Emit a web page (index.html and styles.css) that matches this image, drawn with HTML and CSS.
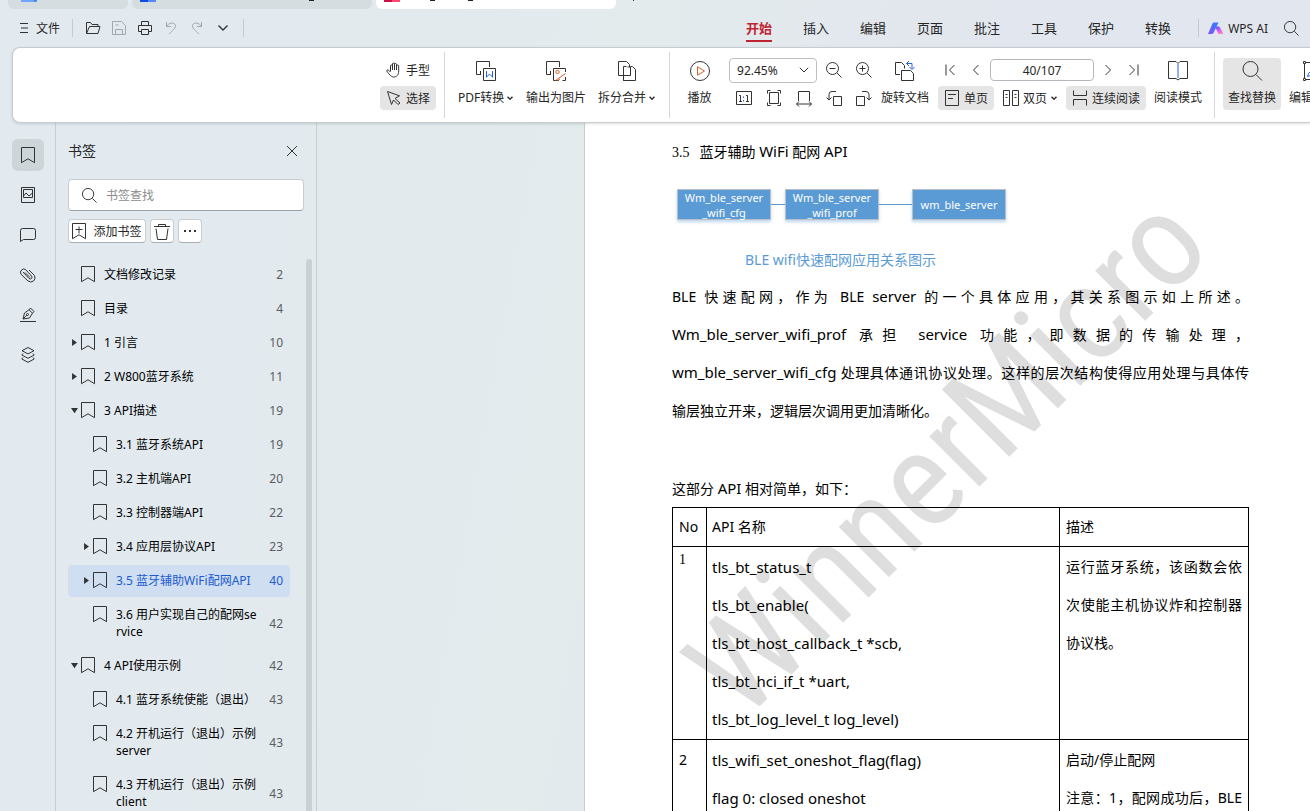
FILE: index.html
```html
<!DOCTYPE html>
<html lang="zh-CN">
<head>
<meta charset="utf-8">
<title>WPS PDF</title>
<link rel="stylesheet" href="styles.css">
</head>
<body>
<svg class="defs" aria-hidden="true">
  <symbol id="bookmark" viewBox="0 0 14 17"><path d="M.5.5h13v15.200L7 11.800.5 15.700z"/></symbol>
  <symbol id="search" viewBox="0 0 18 18"><circle cx="7.500" cy="7.500" r="6"/><path d="M12 12l4.500 4.500"/></symbol>
  <symbol id="caret" viewBox="0 0 6 4"><path d="M.5.7L3 3.200 5.500.7" stroke-width="1.500"/></symbol>
</svg>

<div class="tabstrip">
  <div class="tab tab-small"><svg width="16" height="2"><path fill="#6fa5ff" d="M0 0h13v2H0z"/><path fill="#3f86f5" d="M13 0h3v1l-1 1h-2z"/></svg></div>
  <div class="tab"><svg width="16" height="2"><path fill="#0b4de0" d="M0 0h8v2H0z"/><path fill="#5288f7" d="M8 0h8v2H8z"/></svg><i class="tick"></i></div>
  <div class="tab tab-active"><svg width="16" height="2"><path fill="#c9104b" d="M0 0h8v2H0z"/><path fill="#fb4a6c" d="M8 0h8v2H8z"/></svg><i class="tick near"></i><i class="tick next"></i></div>
  <i class="plus"></i>
</div>

<header class="menubar">
  <button class="file"><svg width="9" height="12"><path d="M0 1.500h8M1 6h7M0 10.500h8"/></svg>文件</button>
  <i class="vline"></i>
  <div class="quick">
    <button aria-label="打开"><svg width="16" height="14"><path d="M1.500 12.500v-11h4l1.500 2h6v2M1.500 12.500l3-7h10.500l-2 7z"/></svg></button>
    <button class="dim" aria-label="保存"><svg width="16" height="16"><path d="M5 14.500H1.500v-13h9l4 4v9H11M4.500 14.500v-5h7v5zM4.500 5h3"/></svg></button>
    <button aria-label="打印"><svg width="16" height="16"><path d="M4.500 5V1.500h7V5M4 11.500H1.500v-6h13v6H12M4.500 9.500h7v5h-7z"/></svg></button>
    <button class="dim" aria-label="撤销"><svg width="14" height="14"><path d="M2.500 1v4.500H7M2.500 5.500C5 1 11.500 1.200 11.500 5c0 2.500-3 4.500-6.500 8"/></svg></button>
    <button class="dim" aria-label="恢复"><svg width="14" height="14"><path d="M11.500 1v4.500H7M11.500 5.500C9 1 2.500 1.200 2.500 5c0 2.500 3 4.500 6.500 8"/></svg></button>
    <button aria-label="更多"><svg width="12" height="8"><path d="M1.500 1.500L6 6l4.500-4.500" stroke-width="1.400"/></svg></button>
  </div>
  <i class="vline"></i>
  <nav class="tabs">
    <a class="on" href="#start">开始</a><a href="#insert">插入</a><a href="#edit">编辑</a><a href="#page">页面</a><a href="#review">批注</a><a href="#tools">工具</a><a href="#protect">保护</a><a href="#convert">转换</a>
  </nav>
  <i class="vline"></i>
  <button class="ai"><svg class="ai-logo" width="16" height="12"><defs><linearGradient id="g1" x1="0" y1="1" x2="1" y2="0"><stop offset="0" stop-color="#8a4dff"/><stop offset="1" stop-color="#2386ff"/></linearGradient><linearGradient id="g2" x1="0" y1="0" x2="1" y2="1"><stop offset="0" stop-color="#3a5bff"/><stop offset=".6" stop-color="#f45bf0"/><stop offset="1" stop-color="#ffb08a"/></linearGradient></defs><path fill="url(#g2)" d="M7 4.500h3.500q1 0 1.500 1l3.500 6.500h-4q-1 0-1.500-1z"/><path fill="url(#g1)" d="M0 12L4.500 1.500Q5 .5 6 .5h4.500L5.500 11q-.4 1-1.500 1z"/></svg>WPS AI</button>
  <button class="find" aria-label="搜索"><svg width="17" height="17"><use href="#search"/></svg></button>
</header>

<section class="ribbon">
  <div class="stack">
    <button class="item"><svg width="16" height="16"><path d="M4.500 9.500V4q0-1 1-1t1 1v4V2q0-1 1-1t1 1v6V2.500q0-1 1-1t1 1V8V4q0-1 1-1t1.200 1v5c0 4-2 6-5 6-2.500 0-3.500-1.500-7-6 0-1.500 2-1.500 3.300.8"/></svg>手型</button>
    <button class="item pressed"><svg width="16" height="16"><path d="M1.500 1.500l12 4.300-4.500 2.700 5 4.500-2 1.500-4.500-4.500-2 4.500z"/></svg>选择</button>
  </div>
  <i class="sep"></i>
  <button class="big w65"><svg width="22" height="22"><path d="M6 14.500H1.500v-13h13V7M5.500 11v3.500"/><path d="M8.500 8.500h12v12h-12z"/><path class="blue" d="M11.500 11v6.500M17.500 11v6.500M11.500 17l3-3 3 3"/></svg><span>PDF转换<svg width="6" height="4"><use href="#caret"/></svg></span></button>
  <button class="big"><svg width="22" height="22"><path d="M6 14.500H1.500v-13h13V7M5.500 11v3.500M14 20.500H8.500v-12h12V12M20.500 17v3.500h-3"/><circle class="orange" cx="12.500" cy="12" r="1.700"/><path class="orange" d="M10.500 20.500l10-7M12 21l3-2"/></svg><span>输出为图片</span></button>
  <button class="big w65"><svg width="22" height="22"><path d="M7 15.500H2.500v-14h8l3 3V7M8 20.500h-.5v-14h3M14.500 6.500h2l3 3v11h-12v-4M11.500 7h3v8.500h-7"/></svg><span>拆分合并<svg width="6" height="4"><use href="#caret"/></svg></span></button>
  <i class="sep sep-late"></i>
  <button class="big w43"><svg width="22" height="22"><circle cx="11" cy="11" r="9.500"/><path class="orange" d="M8.500 6.800v8.400l7-4.200z"/></svg><span>播放</span></button>
  <div class="zoom">
    <div class="line">
      <label class="combo"><select aria-label="缩放比例"><option>92.45%</option></select><svg width="10" height="6"><path d="M.8.8L5 5 9.200.8"/></svg></label>
      <button aria-label="缩小"><svg width="18" height="18"><use href="#search"/><path d="M4.500 7.500h6"/></svg></button>
      <button aria-label="放大"><svg width="18" height="18"><use href="#search"/><path d="M4.500 7.500h6M7.500 4.500v6"/></svg></button>
    </div>
    <div class="line tight">
      <button aria-label="实际大小"><svg width="18" height="18"><path d="M1.500 2.500h15v13h-15z"/><path d="M4 6.500h1.500v6M4 12.500h3M11 6.500h1.500v6M11 12.500h3"/><path class="blue" d="M8.500 7.500v1.500M8.500 11v1.500"/></svg></button>
      <button aria-label="适合页面"><svg width="18" height="18"><path d="M4.500 3.500h9v11h-9zM2.500 4.500v-3h3M12.500 1.500h3v3M2.500 13.500v3h3M12.500 16.500h3v-3"/></svg></button>
      <button aria-label="适合宽度"><svg width="18" height="18"><path d="M3.500 12V2.500h11V12M1.500 15h15M4 12.500L1.500 15 4 17.500M14 12.500l2.500 2.500L14 17.500"/></svg></button>
      <button aria-label="向左旋转"><svg width="18" height="18"><path d="M8.500 7.500h8v9h-8zM11 2.500H7q-3 0-3 3V11M1.500 8.500L4 11l2.500-2.500"/></svg></button>
      <button aria-label="向右旋转"><svg width="18" height="18"><path d="M1.500 7.500h8v9h-8zM7 2.500h4q3 0 3 3V11M11.500 8.500L14 11l2.500-2.500"/></svg></button>
    </div>
  </div>
  <button class="big w50"><svg width="22" height="22"><path d="M6 14.500H1.500v-12h6l3 3v3M7.500 20.500v-10h9l3 3v7z"/><path class="blue" d="M15 1l-2.500 2.500L15 6M12.500 3.500h5.500v5M15.500 7l2.500 2.500L20.500 7"/></svg><span>旋转文档</span></button>
  <div class="nav">
    <div class="line spread">
      <button aria-label="首页"><svg width="12" height="12"><path d="M2 .5v11M10.500 1L5.500 6l5 5"/></svg></button>
      <button aria-label="上一页"><svg width="8" height="12"><path d="M6.500 1l-5 5 5 5"/></svg></button>
      <input class="pageno" aria-label="页码" value="40/107">
      <button aria-label="下一页"><svg width="8" height="12"><path d="M1.500 1l5 5-5 5"/></svg></button>
      <button aria-label="末页"><svg width="12" height="12"><path d="M10 .5v11M1.500 1l5 5-5 5"/></svg></button>
    </div>
    <div class="line between">
      <button class="item pressed"><svg width="16" height="16"><path d="M1.500.5h13v15h-13zM4 4.500h8M4 8.500h5"/></svg>单页</button>
      <button class="item plain"><svg width="16" height="16"><path d="M.5.5h6v15h-6zM9.500.5h6v15h-6zM2.500 4.500h2M2.500 7.500h2M11.500 4.500h2M11.500 7.500h2"/></svg>双页<svg width="6" height="4"><use href="#caret"/></svg></button>
      <button class="item pressed"><svg width="16" height="16"><path d="M1.500.5v5h13v-5M1.500 15.500v-6h13v6"/></svg>连续阅读</button>
    </div>
  </div>
  <button class="big"><svg width="22" height="22"><path d="M11 3.500L9 1.500H1.500v17H9l2 1.500 2-1.500h7.500v-17H13z"/><path class="blue" d="M11 4v14"/></svg><span>阅读模式</span></button>
  <i class="sep sep-end"></i>
  <button class="big pressed w58"><svg width="22" height="22"><circle cx="9.500" cy="9" r="7.500"/><path d="M15 14.500l6 6"/></svg><span>查找替换</span></button>
  <button class="big"><svg width="22" height="22"><path d="M1.500 1.500h2v2h-2zM1.500 18.500h2v2h-2zM18.500 1.500h2v2h-2zM18.500 18.500h2v2h-2zM2.500 4v14M4 2.500h14M4 19.500h14M19.500 4v14"/><path class="blue" d="M5.500 16.500l1-3 7-7 2 2-7 7z"/></svg><span>编辑内容</span></button>
</section>

<main class="work">
  <aside class="rail">
    <button class="active" aria-label="书签"><svg width="14" height="17"><use href="#bookmark"/></svg></button>
    <button aria-label="缩略图"><svg width="16" height="18"><path d="M1.500 1.500h13v15h-13z"/><path d="M3.500 3.500h9v8h-9zM3.500 10l2.500-3 3 3 3.500-3"/></svg></button>
    <button aria-label="批注"><svg width="18" height="16"><path d="M1.500 14.500v-11q0-2 2-2h11q2 0 2 2v7q0 2-2 2h-10z"/></svg></button>
    <button aria-label="附件"><svg width="18" height="16"><path d="M4 5l6 6.500q1.500 1 2.500 0t0-2.500L6.500 2.500Q4.500 1 2.500 3t-.3 4.500L9 14q3 2 5.500 0t1-5.500L10 3M6 5.500L11 10.500"/></svg></button>
    <button aria-label="签名"><svg width="16" height="16"><path d="M0 14.500h16M3 12l1.500-6L9 2.800l3.500 3.400L9.500 11zM9 2.800L10.500 1 14 4.500l-1.500 1.700M3 12l4-4"/><circle cx="7.500" cy="7.500" r="1"/></svg></button>
    <button aria-label="图层"><svg width="16" height="18"><path d="M8 1.500l6 3.200-6 3.200-6-3.200zM3 7.500L1.800 9 8 12.300 14.200 9 13 7.500M3 11.500L1.800 13 8 16.300l6.200-3.300L13 11.500"/></svg></button>
  </aside>

  <aside class="panel">
    <div class="panel-head"><h2>书签</h2><button aria-label="关闭"><svg width="12" height="12"><path d="M1 1l10 10M11 1L1 11"/></svg></button></div>
    <label class="searchbox"><svg width="17" height="17"><use href="#search"/></svg><input type="text" placeholder="书签查找"></label>
    <div class="actions">
      <button class="add"><svg width="14" height="17"><use href="#bookmark"/><path d="M7 3.500v7M3.500 6.500h7"/></svg>添加书签</button>
      <button class="sq" aria-label="删除"><svg width="16" height="17"><path d="M0 3.500h16M4.500 3.500v-2h7v2M2 5.500l1.500 11h9l1.500-11"/></svg></button>
      <button class="sq" aria-label="更多"><svg width="14" height="4"><path class="solid" d="M1 1h2v2H1zM6 1h2v2H6zM11 1h2v2h-2z"/></svg></button>
    </div>
    <div class="scroller">
      <ul class="tree">
        <li><i class="arrow"></i><svg width="14" height="17"><use href="#bookmark"/></svg><a href="#p2">文档修改记录</a><b>2</b></li>
        <li><i class="arrow"></i><svg width="14" height="17"><use href="#bookmark"/></svg><a href="#p4">目录</a><b>4</b></li>
        <li><i class="arrow closed"></i><svg width="14" height="17"><use href="#bookmark"/></svg><a href="#p10">1 引言</a><b>10</b></li>
        <li><i class="arrow closed"></i><svg width="14" height="17"><use href="#bookmark"/></svg><a href="#p11">2 W800蓝牙系统</a><b>11</b></li>
        <li><i class="arrow open"></i><svg width="14" height="17"><use href="#bookmark"/></svg><a href="#p19">3 API描述</a><b>19</b></li>
        <li class="sub"><i class="arrow"></i><svg width="14" height="17"><use href="#bookmark"/></svg><a href="#p19">3.1 蓝牙系统API</a><b>19</b></li>
        <li class="sub"><i class="arrow"></i><svg width="14" height="17"><use href="#bookmark"/></svg><a href="#p20">3.2 主机端API</a><b>20</b></li>
        <li class="sub"><i class="arrow"></i><svg width="14" height="17"><use href="#bookmark"/></svg><a href="#p22">3.3 控制器端API</a><b>22</b></li>
        <li class="sub"><i class="arrow closed"></i><svg width="14" height="17"><use href="#bookmark"/></svg><a href="#p23">3.4 应用层协议API</a><b>23</b></li>
        <li class="sub current"><i class="arrow closed"></i><svg width="14" height="17"><use href="#bookmark"/></svg><a href="#p40">3.5 蓝牙辅助WiFi配网API</a><b>40</b></li>
        <li class="sub"><i class="arrow"></i><svg width="14" height="17"><use href="#bookmark"/></svg><a href="#p42">3.6 用户实现自己的配网se<br>rvice</a><b>42</b></li>
        <li><i class="arrow open"></i><svg width="14" height="17"><use href="#bookmark"/></svg><a href="#p42">4 API使用示例</a><b>42</b></li>
        <li class="sub"><i class="arrow"></i><svg width="14" height="17"><use href="#bookmark"/></svg><a href="#p43">4.1 蓝牙系统使能（退出）</a><b>43</b></li>
        <li class="sub"><i class="arrow"></i><svg width="14" height="17"><use href="#bookmark"/></svg><a href="#p43">4.2 开机运行（退出）示例<br>server</a><b>43</b></li>
        <li class="sub"><i class="arrow"></i><svg width="14" height="17"><use href="#bookmark"/></svg><a href="#p43">4.3 开机运行（退出）示例<br>client</a><b>43</b></li>
      </ul>
      <i class="thumb"></i>
    </div>
  </aside>

  <div class="canvas">
    <article class="page">
      <svg class="watermark" aria-hidden="true"><text transform="translate(158 600) rotate(-45)">WinnerMicro</text></svg>
      <h1><span class="num">3.5</span>蓝牙辅助 <span class="en">WiFi</span> 配网 <span class="en">API</span></h1>
      <div class="diagram">
        <div class="node">Wm_ble_server<br>_wifi_cfg</div><i class="link"></i>
        <div class="node">Wm_ble_server<br>_wifi_prof</div><i class="link long"></i>
        <div class="node">wm_ble_server</div>
      </div>
      <p class="caption">BLE wifi快速配网应用关系图示</p>
      <div class="body">
        <p class="fill">BLE 快速配网，作为 BLE <span class="en">server</span> 的一个具体应用，其关系图示如上所述。</p>
        <p class="fill"><span class="en">Wm_ble_server_wifi_prof</span> 承担 <span class="en">service</span> 功能，即数据的传输处理，</p>
        <p class="fill"><span class="en">wm_ble_server_wifi_cfg</span> 处理具体通讯协议处理。这样的层次结构使得应用处理与具体传</p>
        <p>输层独立开来，逻辑层次调用更加清晰化。</p>
      </div>
      <p class="lead">这部分 <span class="en">API</span> 相对简单，如下：</p>
      <table>
        <colgroup><col class="c-no"><col><col class="c-desc"></colgroup>
        <thead><tr><th>No</th><th>API 名称</th><th>描述</th></tr></thead>
        <tbody>
          <tr><td class="serif">1</td>
            <td class="en">tls_bt_status_t<br>tls_bt_enable(<br>tls_bt_host_callback_t *scb,<br>tls_bt_hci_if_t *uart,<br>tls_bt_log_level_t log_level)</td>
            <td><p class="fill">运行蓝牙系统，该函数会依</p><p class="fill">次使能主机协议炸和控制器</p><p>协议栈。</p></td></tr>
          <tr><td>2</td>
            <td class="en">tls_wifi_set_oneshot_flag(flag)<br>flag 0: closed oneshot</td>
            <td><p>启动/停止配网</p><p class="fill">注意：1，配网成功后，BLE</p></td></tr>
        </tbody>
      </table>
    </article>
  </div>
</main>
</body>
</html>
```
FILE: styles.css
```css
* { box-sizing: border-box; }
html, body { height: 100%; }
body {
  margin: 0;
  display: flex;
  flex-direction: column;
  overflow: hidden;
  background: linear-gradient(100deg, #e2eaf0 0%, #e2eaee 30%, #e3ebed 45%, #e2e6ee 70%);
  color: #262626;
  font: 12px/17px "Noto Sans", "Noto Sans CJK SC", sans-serif;
}
button, input, select { font: inherit; color: inherit; margin: 0; }
button { border: 0; background: none; padding: 0; display: flex; align-items: center; justify-content: center; white-space: nowrap; }
a { color: inherit; text-decoration: none; }
h1, h2, p, ul { margin: 0; padding: 0; font-weight: normal; }
svg { display: block; flex: none; fill: none; stroke: #333; stroke-width: 1; }
.defs { position: absolute; width: 0; height: 0; }
.blue { stroke: #2a5fe8; }
.orange { stroke: #d2622a; }
.solid { fill: #333; stroke: none; }

.tabstrip { display: flex; gap: 4px; height: 9px; padding-left: 8px; flex: none; }
.tab { display: flex; width: 240px; padding-left: 8px; background: #d6dde0; border-radius: 0 0 6px 6px; }
.tab svg { stroke: none; }
.tab-small { width: 120px; padding-left: 13px; }
.tab-active { background: #fff; }
.tick { width: 5px; height: 1px; background: #222; margin-left: 153px; }
.tick.near { margin-left: 30px; }
.tick.next { margin-left: 33px; }
.plus { width: 1px; height: 1px; background: #333; margin-left: 13px; }

.menubar { display: flex; align-items: center; height: 38px; padding: 0 10px 0 20px; flex: none; }
.file { gap: 7px; }
.vline { width: 1px; height: 18px; background: #c4cacf; }
.file + .vline { margin-left: 12px; }
.quick { display: flex; gap: 2px; padding: 0 8px; }
.quick button { width: 24px; height: 24px; }
.dim svg { stroke: #a3a8ab; }
.tabs { display: flex; gap: 31px; margin-left: auto; padding-right: 27px; font-size: 13px; }
.tabs a { line-height: 20px; padding: 4px 0 2px; border-bottom: 2px solid transparent; }
.tabs .on { color: #c02433; font-weight: 700; border-color: #c02433; }
.ai { gap: 4px; padding-left: 9px; }
.ai-logo { stroke: none; }
.find { margin-left: 15px; }

.ribbon {
  display: flex;
  gap: 8px;
  height: 76px;
  flex: none;
  margin-left: 12px;
  padding: 10px 0 0 367px;
  background: #fff;
  border: 1px solid #c6cccf;
  border-right: 0;
  border-radius: 8px 0 0 8px;
  box-shadow: 0 1px 3px #0002;
  overflow: hidden;
  position: relative;
  z-index: 1;
}
.ribbon > * { flex: none; }
.stack { display: grid; gap: 4px; align-content: start; }
.item { height: 24px; gap: 4px; padding: 0 6px; border-radius: 4px; }
.plain { padding: 0; }
.pressed { background: #e5e5e5; }
.sep { width: 1px; height: 66px; margin-top: -6px; background: #d6d8da; }
.sep-late { margin-left: 2px; }
.sep-end { margin-left: 4px; }
.big { flex-direction: column; justify-content: flex-start; height: 52px; padding-top: 2px; gap: 4px; border-radius: 4px; }
.big span { display: flex; align-items: center; gap: 3px; line-height: 24px; }
.w43 { width: 43px; }
.w50 { width: 50px; }
.w58 { width: 58px; }
.w65 { width: 65px; }
.zoom, .nav { display: grid; gap: 4px; align-content: start; }
.zoom { width: 143px; }
.nav { width: 208px; }
.line { display: flex; align-items: center; height: 24px; gap: 12px; }
.combo { display: flex; align-items: center; width: 88px; margin-right: -4px; height: 25px; padding-right: 7px; border: 1px solid #bcc0c4; border-radius: 4px; }
.combo select { flex: 1; appearance: none; border: 0; background: none; padding: 0 0 0 7px; }
.tight { padding-left: 6px; }
.spread { gap: 16px; padding: 0 6px; justify-content: center; }
.between { justify-content: space-between; gap: 0; }
.pageno { width: 104px; height: 22px; margin: 0 -6px; padding: 0; text-align: center; border: 1px solid #b4b8bc; border-radius: 4px; }

.work { display: flex; flex: 1; min-height: 0; }
.rail { display: flex; flex-direction: column; gap: 8px; width: 56px; padding: 16px 12px 0; border-right: 1px solid #c9ced1; flex: none; }
.rail button { width: 32px; height: 32px; border-radius: 6px; flex: none; }
.rail .active { background: #ced5d8; }
.panel { display: flex; flex-direction: column; width: 261px; padding: 16px 0 0 12px; border-right: 1px solid #c9ced1; flex: none; }
.panel-head { display: flex; justify-content: space-between; align-items: center; height: 24px; padding-right: 18px; }
.panel-head h2 { font-size: 14px; line-height: 24px; }
.searchbox { display: flex; align-items: center; gap: 8px; height: 32px; margin: 16px 12px 8px 0; padding-left: 12px; background: #fff; border: 1px solid #c8cdd1; border-bottom-color: #9da2a6; border-radius: 4px; flex: none; }
.searchbox input { flex: 1; min-width: 0; border: 0; padding: 0; background: none; outline: 0; }
.searchbox input::placeholder { color: #8b8b8b; opacity: 1; }
.actions { display: flex; gap: 4px; height: 24px; flex: none; }
.actions button { background: #fff; border: 1px solid #c8cdd1; border-bottom-color: #a9aeb2; border-radius: 4px; }
.add { width: 78px; gap: 7px; }
.sq { width: 24px; }
.scroller { display: flex; justify-content: space-between; flex: 1; min-height: 0; margin-top: 16px; padding-right: 4px; overflow: hidden; }
.thumb { width: 6px; background: #cacfd2; border-radius: 3px 3px 0 0; }
.tree { list-style: none; width: 222px; color: #000; }
.tree li { display: flex; padding: 7px 7px 8px 3px; margin-bottom: 2px; border-radius: 4px; }
.tree .sub { padding-left: 15px; }
.tree li > svg { margin: 0 9px 0 3px; }
.tree a { flex: 1; white-space: nowrap; }
.tree b { align-self: center; font-weight: normal; color: #5a5e61; }
.arrow { width: 7px; height: 7px; margin-top: 5px; flex: none; }
.closed { background: #333; clip-path: polygon(15% 0, 85% 50%, 15% 100%); }
.open { background: #333; clip-path: polygon(0 15%, 100% 15%, 50% 90%); }
.tree .current { background: #cfdef0; }
.tree .current a, .tree .current b { color: #1c5bd0; }

.canvas { flex: 1; min-width: 0; padding-left: 267px; display: flex; }
.page { flex: 1; min-width: 0; position: relative; padding: 10px 61px 0 87px; overflow: hidden; background: #fff; border-left: 1px solid #c5cdd2; color: #000; font-size: 14px; line-height: 38px; }
.page > :not(.watermark) { position: relative; }
.watermark { position: absolute; inset: 0; width: 100%; height: 100%; stroke: none; }
.watermark text { font: 134px "Roboto Condensed", "Liberation Sans", sans-serif; fill: #dedede; }
.page h1 { font-size: 14px; }
.page .en { font-size: 15px; line-height: 1; }
.page td.en { line-height: 38px; }
.num { font-family: "Liberation Serif", serif; margin-right: 10px; }
.diagram { display: flex; align-items: center; margin: 17px 0 0 5px; }
.node { display: flex; align-items: center; justify-content: center; text-align: center; width: 94px; height: 31px; background: #5b9bd5; border: 1px solid #b9bfc8; box-shadow: 0 2px 3px #5b9bd566; color: #fff; font-size: 11px; line-height: 15px; white-space: nowrap; }
.link { width: 14px; height: 1px; background: #5b9bd5; }
.long { width: 33px; }
.caption { margin: 30px 0 8px 73px; line-height: 20px; color: #5b9bd5; }
.body p, td p { white-space: nowrap; }
.fill { text-align: justify; text-align-last: justify; }
.lead { margin-top: 41px; line-height: 36px; }
table { width: 100%; border-collapse: collapse; table-layout: fixed; }
.c-no { width: 34px; }
.c-desc { width: 189px; }
th, td { border: 1px solid #000; padding: 1px 6px 1px 5px; text-align: left; vertical-align: top; font-weight: normal; }
th { padding-top: 0; padding-bottom: 0; }
td:first-child, th:first-child { padding-left: 6px; padding-right: 0; }
td:last-child, th:last-child { padding-left: 6px; }
td.serif { font-family: "Liberation Serif", serif; line-height: 24px; }
```
